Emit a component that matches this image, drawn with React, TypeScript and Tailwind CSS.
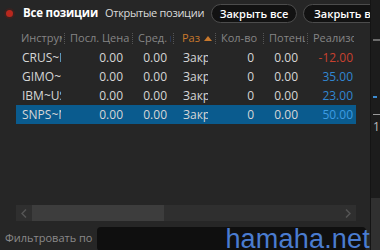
import React from 'react';

type Row = {
  sym: string;
  last: string;
  avg: string;
  side: string;
  qty: string;
  pot: string;
  real: string;
  tone: 'neg' | 'pos';
  selected?: boolean;
};

const rows: Row[] = [
  { sym: 'CRUS~NASDAQ', last: '0.00', avg: '0.00', side: 'Закрыта', qty: '0', pot: '0.00', real: '-12.00', tone: 'neg' },
  { sym: 'GIMO~NASDAQ', last: '0.00', avg: '0.00', side: 'Закрыта', qty: '0', pot: '0.00', real: '35.00', tone: 'pos' },
  { sym: 'IBM~US', last: '0.00', avg: '0.00', side: 'Закрыта', qty: '0', pot: '0.00', real: '23.00', tone: 'pos' },
  { sym: 'SNPS~NASDAQ', last: '0.00', avg: '0.00', side: 'Закрыта', qty: '0', pot: '0.00', real: '50.00', tone: 'pos', selected: true },
];

function Sep() {
  return <span className="h-[11px] w-0 shrink-0 border-l border-dotted border-[#555]" />;
}

function HeadCell({ w, label, active }: { w: string; label: string; active?: boolean }) {
  return (
    <div className={`${w} flex items-center shrink-0 overflow-hidden`}>
      <div className={`flex items-center min-w-0 flex-1 overflow-hidden whitespace-nowrap pr-[2px] ${active ? 'pl-[8px] text-[#c8782c]' : 'pl-[5px] text-[#858585]'}`}>
        <span className={active ? 'w-[18px] overflow-hidden shrink-0' : 'overflow-hidden'}>{label}</span>
        {active && (
          <svg width="8" height="5" viewBox="0 0 8 5" className="ml-[4px] shrink-0">
            <path d="M0 5 L4 0 L8 5 Z" fill="#c8782c" />
          </svg>
        )}
      </div>
    </div>
  );
}

export default function App() {
  return (
    <div
      className="flex w-[380px] h-[250px] overflow-hidden bg-[#1b1b1b] text-[12px]"
      style={{ fontFamily: '"Open Sans", "Noto Sans", sans-serif' }}
    >
      <div className="relative flex flex-col w-[370px] shrink-0 bg-[#262626] overflow-hidden">
        {/* tabs + actions */}
        <div className="flex items-center h-[24px] pt-[2px] whitespace-nowrap">
          <span className="ml-[6px] w-[7px] h-[7px] rounded-full bg-[#b8281e] ring-2 ring-[#3a2220] shrink-0" />
          <span className="ml-[10px] w-[82px] shrink-0 font-bold text-white text-[11.5px] tracking-[-0.2px]">Все позиции</span>
          <span className="w-[106px] shrink-0 text-[#dcdcdc] text-[11px] tracking-[-0.3px]">Открытые позиции</span>
          <button className="h-[19px] w-[86px] shrink-0 rounded-full bg-[#121212] border border-[#4c4c4c] text-white text-[11px] font-semibold leading-none">
            Закрыть все
          </button>
          <button className="ml-[6px] h-[19px] pl-[10px] pr-[10px] shrink-0 rounded-full bg-[#121212] border border-[#4c4c4c] text-white text-[11px] font-semibold leading-none text-left">
            Закрыть выбранные
          </button>
        </div>

        {/* table */}
        <div className="ml-[16px] w-[340px] mt-[4px]">
          <div className="flex items-center h-[20px] text-[11px]">
            <HeadCell w="w-[48px]" label="Инструмент" />
            <Sep />
            <HeadCell w="w-[67px]" label="Посл. Цена" />
            <Sep />
            <HeadCell w="w-[40px]" label="Сред. цена" />
            <Sep />
            <HeadCell w="w-[41px]" label="Размер" active />
            <Sep />
            <HeadCell w="w-[47px]" label="Кол-во" />
            <Sep />
            <HeadCell w="w-[43px]" label="Потенциал" />
            <Sep />
            <HeadCell w="w-[48px]" label="Реализовано" />
          </div>
          {rows.map((r) => (
            <div
              key={r.sym}
              className={`flex items-center h-[19px] whitespace-nowrap text-[#d6d6d6] ${r.selected ? 'bg-[#0a5b8e]' : ''}`}
            >
              <div className="w-[48px] shrink-0 pl-[6px] pr-[3px]">
                <div className="overflow-hidden">{r.sym}</div>
              </div>
              <div className="w-[68px] shrink-0 pr-[9px] text-right">{r.last}</div>
              <div className="w-[41px] shrink-0 pr-[6px] text-right">{r.avg}</div>
              <div className="w-[42px] shrink-0 pl-[10px] pr-[7px]">
                <div className="overflow-hidden">{r.side}</div>
              </div>
              <div className="w-[48px] shrink-0 pr-[9px] text-right">{r.qty}</div>
              <div className="w-[44px] shrink-0 pr-[9px] text-right">{r.pot}</div>
              <div
                className={`flex-1 pr-[3px] text-right ${r.tone === 'neg' ? 'text-[#c8412f]' : r.selected ? 'text-[#3d9ce2]' : 'text-[#3187d2]'}`}
              >
                {r.real}
              </div>
            </div>
          ))}
        </div>

        <div className="flex-1" />

        {/* horizontal scrollbar */}
        <div className="ml-[16px] w-[340px] h-[16px] flex items-center bg-[#2f2f2f]">
          <div className="w-[16px] flex justify-center">
            <svg width="6" height="9" viewBox="0 0 6 9">
              <path d="M5 0.5 L1 4.5 L5 8.5" stroke="#555" strokeWidth="1.5" fill="none" />
            </svg>
          </div>
          <div className="w-[132px] h-full bg-[#3d3d3d]" />
          <div className="flex-1" />
          <div className="w-[16px] flex justify-center">
            <svg width="6" height="9" viewBox="0 0 6 9">
              <path d="M1 0.5 L5 4.5 L1 8.5" stroke="#555" strokeWidth="1.5" fill="none" />
            </svg>
          </div>
        </div>

        {/* filter */}
        <div className="flex items-center h-[24px] mt-[5px]">
          <span className="ml-[5px] w-[92px] shrink-0 text-[11px] text-[#8a8a8a] whitespace-nowrap">Фильтровать по</span>
          <div className="w-[269px] h-[24px] mt-[2px] rounded-[4px] bg-[#0f0f0f]" />
        </div>

        <span
          className="absolute right-[0px] bottom-[-3px] text-[27px] leading-none text-[#4a7cd0] tracking-[0.2px]"
          style={{ fontFamily: '"Liberation Sans", Arial, sans-serif' }}
        >
          hamaha.net
        </span>
      </div>

      {/* neighbouring panel edge */}
      <div className="flex-1 flex flex-col bg-[#1c1c1c] border-l border-[#141414]">
        <div className="h-[39px]" />
        <div className="ml-[2px] h-[2px] bg-[#6c6c6c]" />
        <div className="h-[55px]" />
        <div className="ml-[2px] w-[4px] h-[2px] bg-[#3d8bd0]" />
        <div className="h-[16px]" />
        <div className="ml-[2px] h-px bg-[#9a9a9a]" />
        <div className="h-[20px] mt-[2px] pl-[2px] text-[12px] text-[#bbb] leading-[20px]">1</div>
        <div className="flex-1" />
        <div className="h-[52px] bg-[#303030]" />
      </div>
    </div>
  );
}
